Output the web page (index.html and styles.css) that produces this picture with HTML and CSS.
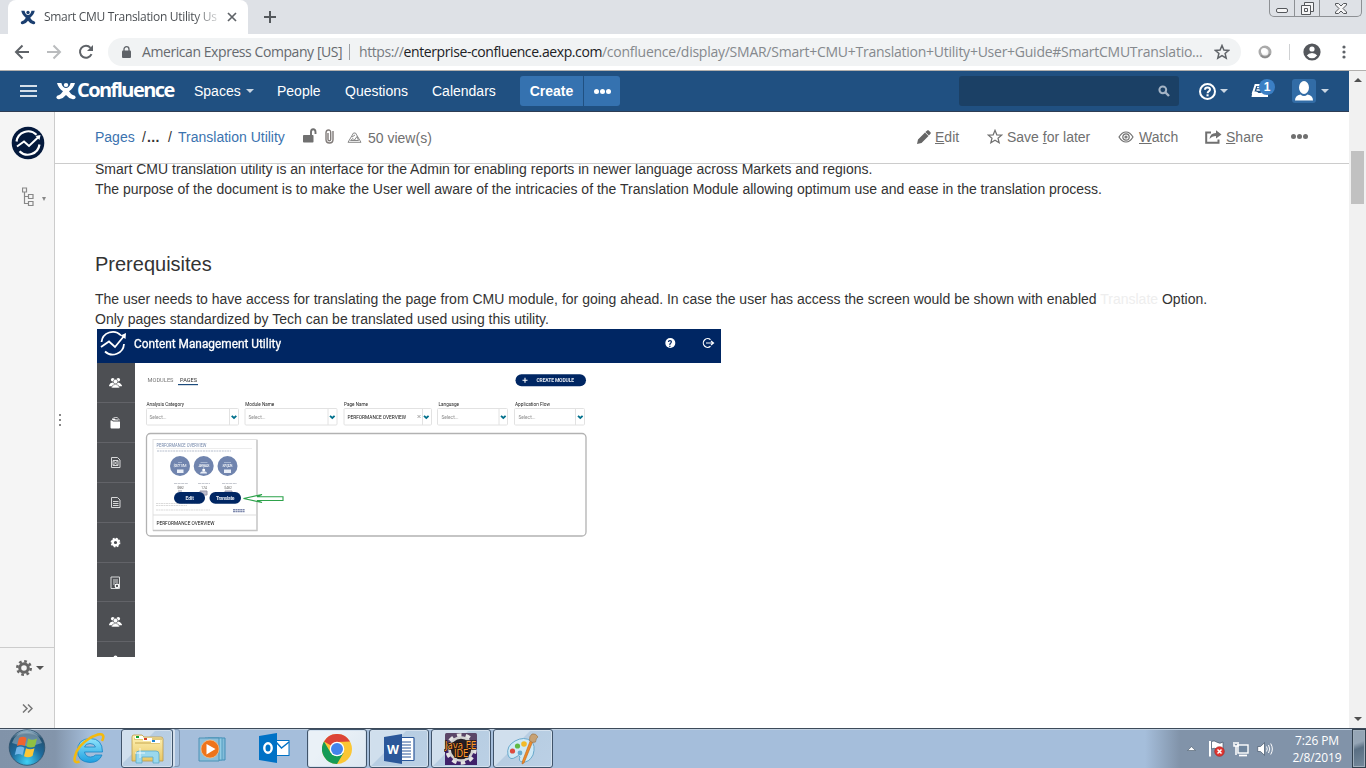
FILE: index.html
```html
<!DOCTYPE html>
<html lang="en">
<head>
<meta charset="utf-8">
<title>Smart CMU Translation Utility User Guide</title>
<link rel="stylesheet" href="styles.css">
</head>
<body>
<svg width="0" height="0" class="defs">
  <defs>
    <symbol id="conf" viewBox="0 0 16 16"><circle cx="8" cy="2.600" r="1.800"/><path d="M.8 .8H4.300C4.800 3.800 6.500 5.300 8 5.300S11.200 3.800 11.700 .8H15.200C14.500 4 12.700 6.500 10.400 8.200C11.500 10 12.500 11 13.500 11.500Q15.500 12 15.800 13.500Q15.500 15.500 13.500 15.300Q10 14.500 8 11.500Q6 14.500 2.500 15.300Q.5 15.500 .2 13.500Q.5 12 2.500 11.500C3.500 11 4.500 10 5.600 8.200C3.300 6.500 1.500 4 .8 .8Z"/></symbol>
    <symbol id="people" viewBox="0 0 14 12"><circle cx="4" cy="3" r="2"/><circle cx="10" cy="3" r="2"/><path d="M0 9Q1 6 4 6T7 8Q8 6 10 6T14 9V10H0Z"/><circle cx="7" cy="5" r="2.500" stroke="#4d4f53" stroke-width=".6"/><path d="M2.500 12Q3 8 7 8T11.500 12Z" stroke="#4d4f53" stroke-width=".6"/></symbol>
    <linearGradient id="gold" x2="0" y2="1"><stop stop-color="#fff3b8"/><stop offset="1" stop-color="#e8c765"/></linearGradient>
    <radialGradient id="orb" cx=".5" cy=".9" r=".9"><stop stop-color="#3fd0f5"/><stop offset=".5" stop-color="#1d6a9c"/><stop offset=".85" stop-color="#23506f"/><stop offset="1" stop-color="#a9c5d8"/></radialGradient>
    <linearGradient id="ie" x2="0" y2="1"><stop stop-color="#8fe4fb"/><stop offset="1" stop-color="#1e9fe0"/></linearGradient>
    <filter id="soft"><feGaussianBlur stdDeviation=".35"/></filter>
  </defs>
</svg>

<div class="tabstrip">
  <div class="tab">
    <svg class="fav" width="16" height="15"><use href="#conf"/></svg>
    <span class="tab-title">Smart CMU Translation Utility Us</span>
    <svg class="tab-x" width="10" height="10" viewBox="0 0 10 10"><path d="M1 1L9 9M9 1L1 9"/></svg>
  </div>
  <svg class="newtab" width="12" height="12" viewBox="0 0 12 12"><path d="M6 0V12M0 6H12"/></svg>
  <div class="winbtns">
    <span class="wb w1"><svg width="12" height="5" viewBox="0 0 12 5"><rect x=".5" y=".5" width="11" height="4" rx="1.500"/></svg></span>
    <span class="wb w2"><svg width="13" height="13" viewBox="0 0 13 13"><path d="M3.500 3V.5H12.500V9.500H9.500M.5 3.500H9.500V12.500H.5ZM3.500 6.500H6.500V9.500H3.500Z"/></svg></span>
    <span class="wb w3"><svg width="12" height="11" viewBox="0 0 12 11"><path d="M.5 .5H3.500L6 3L8.500 .5H11.500V2L8 5.500L11.500 9V10.500H8.500L6 8L3.500 10.500H.5V9L4 5.500L.5 2Z"/></svg></span>
  </div>
</div>

<div class="toolbar">
  <svg class="back" width="16" height="16" viewBox="0 0 16 16"><path d="M15 8H2M8.500 1.500L2 8L8.500 14.500"/></svg>
  <svg class="fwd" width="16" height="16" viewBox="0 0 16 16"><path d="M1 8H14M7.500 1.500L14 8L7.500 14.500"/></svg>
  <svg class="reload" width="16" height="16" viewBox="0 0 16 16"><path d="M13.500 10.200A6 6 0 1 1 12.500 3.800" fill="none" stroke="#5f6368" stroke-width="2"/><path d="M15 1V7H9Z" fill="#5f6368"/></svg>
  <div class="omnibox">
    <svg class="lock" width="9" height="12" viewBox="0 0 9 12"><path d="M2 5V3.200A2.500 2.500 0 0 1 7 3.200V5" fill="none" stroke="#5f6368" stroke-width="1.300"/><rect y="4.500" width="9" height="7.500" rx="1" fill="#5f6368"/></svg>
    <span class="company">American Express Company [US]</span>
    <span class="osep"></span>
    <span class="url">https://<b>enterprise-confluence.aexp.com</b><i>/confluence/display/SMAR/Smart+CMU+Translation+Utility+User+Guide#SmartCMUTranslatio...</i></span>
    <svg class="star" width="16" height="16" viewBox="0 0 16 16"><path d="M8 1.500L9.900 6L14.700 6.400L11.100 9.500L12.200 14.200L8 11.700L3.800 14.200L4.900 9.500L1.300 6.400L6.100 6Z" fill="none" stroke="#5f6368" stroke-width="1.500"/></svg>
  </div>
  <svg class="ext" width="14" height="14" viewBox="0 0 14 14"><circle cx="7" cy="7" r="5" fill="#f4f4f4" stroke="#aaa" stroke-width="3"/><path d="M3 10.500A5.500 5.500 0 0 0 12 9" stroke="#888" stroke-width="1.500" fill="none"/><circle cx="6" cy="6" r="3" fill="#fff"/></svg>
  <span class="tsep"></span>
  <svg class="prof" width="18" height="18" viewBox="0 0 18 18"><circle cx="9" cy="9" r="8.600" fill="#54575c"/><circle cx="9" cy="6" r="2.600" fill="#fff"/><path d="M3.800 12.500Q5.500 10 9 10T14.200 12.500Q12 15.300 9 15.300T3.800 12.500Z" fill="#fff"/></svg>
  <svg class="kebab" width="4" height="14" viewBox="0 0 4 14" fill="#5f6368"><circle cx="2" cy="2" r="1.600"/><circle cx="2" cy="7" r="1.600"/><circle cx="2" cy="12" r="1.600"/></svg>
</div>

<div class="page">
  <div class="site">
    <header class="nav">
      <svg class="burger" width="17" height="12" viewBox="0 0 17 12"><path d="M0 1H17M0 6H17M0 11H17" stroke="#d5dfe9" stroke-width="2"/></svg>
      <svg class="logo" width="20" height="18" viewBox="0 0 16 16" preserveAspectRatio="none"><use href="#conf" width="16" height="16"/></svg>
      <span class="brand">Confluence</span>
      <span class="n n1">Spaces <em class="car"></em></span>
      <span class="n n2">People</span>
      <span class="n n3">Questions</span>
      <span class="n n4">Calendars</span>
      <span class="create">Create</span><span class="more"><s></s><s></s><s></s></span>
      <div class="search"><svg width="12" height="12" viewBox="0 0 12 12"><circle cx="4.800" cy="4.800" r="3.400" fill="none" stroke="#a5b4c5" stroke-width="2"/><path d="M7 7L11 11" stroke="#a5b4c5" stroke-width="2.400"/></svg></div>
      <svg class="help" width="17" height="17" viewBox="0 0 17 17"><circle cx="8.500" cy="8.500" r="7.500" fill="none" stroke="#fff" stroke-width="2"/><path d="M6 6.800Q6 4.500 8.500 4.500T11 6.600Q11 7.700 9.700 8.400Q8.600 9 8.600 10.300" fill="none" stroke="#fff" stroke-width="2"/><rect x="7.500" y="11.300" width="2.100" height="2" fill="#fff"/></svg>
      <em class="car c2"></em>
      <div class="inbox"><svg width="18" height="14" viewBox="0 0 18 14"><path d="M4.500 1H13L12.500 9H11L10 10H7L6 9H2Z" fill="none" stroke="#fff" stroke-width="2"/><path d="M1.500 7.500H5.500L6.500 10.300H11L12 7.500H17V13H.5Z" fill="#fff"/><path d="M6 3.500H10M5.500 6H10" stroke="#fff" stroke-width="1.300"/></svg><span class="badge">1</span></div>
      <svg class="avatar" width="24" height="24" viewBox="0 0 24 24"><rect width="24" height="24" rx="3" fill="#326ca6"/><ellipse cx="12" cy="8.500" rx="5" ry="6.500" fill="#fff"/><path d="M3 21.500Q3 16.500 8.500 15.500Q12 18.500 15.500 15.500Q21 16.500 21 21.500Z" fill="#fff"/></svg>
      <em class="car c3"></em>
    </header>
    <div class="body">
      <aside class="side">
        <svg class="slogo" width="34" height="34" viewBox="0 0 34 34"><circle cx="17" cy="17" r="16.300" fill="#04193c"/><path d="M5.500 15.500A11.800 11.800 0 0 1 25.500 8.800M28.500 18.500A11.800 11.800 0 0 1 8.500 25.200" fill="none" stroke="#fff" stroke-width="2.200"/><path d="M6 20.500L13 15.500L18 20L28 10.500" fill="none" stroke="#fff" stroke-width="2"/><path d="M29.500 9L28.500 14L24.500 10Z" fill="#fff"/></svg>
        <div class="treerow"><svg width="12" height="20" viewBox="0 0 12 20" fill="none" stroke="#888"><path d="M.5 1H4.500V5H.5ZM2.500 5V16.500H6.500M2.500 9.500H6.500M6.500 7.500H11V11.500H6.500ZM6.500 14.500H11V18.500H6.500Z" stroke-width="1.200"/></svg><em class="car cs"></em></div>
        <div class="foot">
          <div class="gearrow"><svg width="16" height="16" viewBox="0 0 16 16"><circle cx="8" cy="8" r="6.700" fill="none" stroke="#666" stroke-width="2.600" stroke-dasharray="2.700 2.560"/><circle cx="8" cy="8" r="4.300" fill="none" stroke="#666" stroke-width="3"/></svg><em class="car cg"></em></div>
          <svg class="expand" width="11" height="9" viewBox="0 0 11 9"><path d="M1 .5L5 4.500L1 8.500M6 .5L10 4.500L6 8.500" fill="none" stroke="#777" stroke-width="1.500"/></svg>
        </div>
      </aside>
      <div class="grip"><s></s><s></s><s></s></div>
      <main class="main">
        <div class="phead">
          <div class="crumbs"><a class="k1">Pages</a><span class="k2">/<b>...</b></span><span class="k3">/</span><a class="k4">Translation Utility</a>
            <svg class="unlock" width="14" height="15" viewBox="0 0 14 15"><rect y="7" width="10.500" height="7.500" rx=".8" fill="#707070"/><path d="M8 7.500V4Q8 1.200 10.200 1.200T12.500 4V6" fill="none" stroke="#707070" stroke-width="1.900"/></svg>
            <svg class="clip" width="9" height="15" viewBox="0 0 9 15" fill="none"><path d="M3 4V10.500Q3 11.800 4.300 11.800T5.700 10.500V3.500Q5.700 1 3.500 1T1 3.500V10.500Q1 14 4.500 14T8 10.500V2" stroke="#807b79" stroke-width="1.400"/></svg>
            <svg class="tri" width="15" height="11" viewBox="0 0 15 11" fill="none" stroke="#888"><path d="M1 10.300L6.500 1H8.500L14 10.300ZM3.500 8.500L6 6.500L7.500 8L10 4.500L11.500 8.500ZM5 5L8 3"/></svg>
            <span class="views">50 view(s)</span></div>
          <div class="acts">
            <svg class="a1" width="14" height="14" viewBox="0 0 14 14"><path d="M0 14L1 9.500L8 2.500L11.500 6L4.500 13ZM8.400 2.100L10.500 .3Q11 0 11.500 .3L13.700 2.500Q14 3 13.700 3.500L11.900 5.600Z" fill="#666"/></svg><span class="t1"><u>E</u>dit</span>
            <svg class="a2" width="16" height="15" viewBox="0 0 16 15"><path d="M8 1.300L9.800 5.800L14.700 6.100L11 9.200L12.200 13.800L8 11.300L3.800 13.800L5 9.200L1.300 6.100L6.200 5.800Z" fill="none" stroke="#707070" stroke-width="1.200"/></svg><span class="t2">Save <u>f</u>or later</span>
            <svg class="a3" width="16" height="12" viewBox="0 0 16 12" fill="none" stroke="#707070" stroke-width="1.200"><path d="M1 6Q4 1 8 1T15 6Q12 11 8 11T1 6Z"/><circle cx="8" cy="6" r="3.200"/><circle cx="8" cy="6" r="1"/></svg><span class="t3"><u>W</u>atch</span>
            <svg class="a4" width="17" height="14" viewBox="0 0 17 14"><path d="M6 2.500H1.200V12.800H13.500V9.500" fill="none" stroke="#707070" stroke-width="2"/><path d="M4.500 9Q5 3.200 11 3V.3L16.500 4.500L11 8.500V6Q7 6 4.500 9Z" fill="#707070"/></svg><span class="t4"><u>S</u>hare</span>
            <span class="dots"><s></s><s></s><s></s></span>
          </div>
        </div>
        <div class="content">
          <p class="l p1"><span class="s1">Smart CMU translation utility is an interface for the Admin for enabling reports in newer language across Markets and regions.</span><br><span class="s2">The purpose of the document is to make the User well aware of the intricacies of the Translation Module allowing optimum use and ease in the translation process.</span></p>
          <h2>Prerequisites</h2>
          <p class="l"><span class="s3">The user needs to have access for translating the page from CMU module, for going ahead. In case the user has access the screen would be shown with enabled <span class="ghost">Translate</span> Option.</span><br><span class="s4">Only pages standardized by Tech can be translated used using this utility.</span></p>
          <svg class="shot" width="624" height="328" viewBox="97 329 624 328">
            <rect x="97" y="329" width="624" height="328" fill="#fff"/>
            <rect x="97" y="329" width="624" height="34" fill="#002663"/>
            <rect x="97" y="363" width="38" height="294" fill="#4d4f53"/>
            <g filter="url(#soft)">
              <path d="M101.500 342A11.300 11.300 0 0 1 121 335.500M124 344A11.300 11.300 0 0 1 105 351.500" fill="none" stroke="#fff" stroke-width="1.800"/>
              <path d="M101 347L109 341.500L115 347L124 336" fill="none" stroke="#fff" stroke-width="1.800"/>
              <path d="M126 333L125.500 339L120.500 335.500Z" fill="#fff"/>
              <text class="m" x="134" y="348.300" font-size="12" fill="#fff" stroke="#fff" stroke-width=".3" textLength="147" lengthAdjust="spacingAndGlyphs">Content Management Utility</text>
              <circle cx="670.300" cy="343" r="5" fill="#fff"/><text class="m" x="667.800" y="346.500" font-size="9" font-weight="700" fill="#002663">?</text>
              <path d="M710.500 339.800A4.300 4.300 0 1 0 710.500 346.200M706 343H713M711 341L713.500 343L711 345" fill="none" stroke="#fff" stroke-width="1.200"/>
              <path d="M97 402.500H135M97 442.500H135M97 482.500H135M97 522.500H135M97 562.500H135M97 601.500H135M97 641.500H135" stroke="#626468"/>
              <g fill="#fff">
                <use href="#people" x="109" y="377" width="13" height="11"/><use href="#people" x="109" y="616" width="13" height="11"/>
                <path d="M110.500 420.500H112L113 421.500H120V427.500Q120 428.500 119 428.500H111.500Q110.500 428.500 110.500 427.500ZM112 419.500V418.500H114.500L115.500 419.500H118V420.500H113.500ZM113.500 417.500V417H117L119.500 419.500V420.500H118.500V419L117 417.800Z"/>
                <circle cx="115.500" cy="657.500" r="2"/>
              </g>
              <g fill="none" stroke="#d7d8d9">
                <path d="M111.500 457.500H117.500L120 460V467.500H111.500ZM113 460.500H118V465.500H113ZM113.500 461L117.500 465M117.500 461L113.500 465"/>
                <path d="M111.500 497.500H117.500L120 500V507.500H111.500ZM113 501.500H118.500M113 503.500H118.500M113 505.500H118.500" />
                <path d="M112 577H119.500V588.500H111V577ZM113 580H118M113 582H118M113 584H115"/>
                <circle cx="117" cy="586" r="1.800" fill="#4d4f53" stroke="#fff" stroke-width="1.300"/>
                <circle cx="115.500" cy="542.500" r="2.800" stroke="#fff" stroke-width="2.400"/><circle cx="115.500" cy="542.500" r="4.200" stroke="#fff" stroke-width="1.400" stroke-dasharray="1.700 1.600"/>
              </g>
              <text class="m" x="147.500" y="381.700" font-size="5.500" fill="#777" textLength="26" lengthAdjust="spacingAndGlyphs">MODULES</text>
              <text class="m" x="180" y="381.700" font-size="5.500" fill="#333" textLength="17" lengthAdjust="spacingAndGlyphs">PAGES</text>
              <rect x="178" y="384" width="20" height="1.200" fill="#1f4b7d"/>
              <rect x="515.500" y="374.300" width="70.500" height="12" rx="6" fill="#002663"/>
              <path d="M525 377.800V382.800M522.500 380.300H527.500" stroke="#fff" stroke-width="1.100"/>
              <text class="m" x="536.500" y="382.300" font-size="5" font-weight="700" fill="#dfe5ee" textLength="37.500">CREATE MODULE</text>
              <g class="m" font-size="4.600" fill="#222">
                <text x="146.500" y="405.800" textLength="37.500" lengthAdjust="spacingAndGlyphs">Analysis Category</text><text x="245.300" y="405.800" textLength="29" lengthAdjust="spacingAndGlyphs">Module Name</text><text x="344" y="405.800" textLength="24" lengthAdjust="spacingAndGlyphs">Page Name</text><text x="438.500" y="405.800" textLength="20.500" lengthAdjust="spacingAndGlyphs">Language</text><text x="515" y="405.800" textLength="35" lengthAdjust="spacingAndGlyphs">Application Flow</text>
              </g>
              <g fill="#fff" stroke="#e2e2e2">
                <rect x="146.500" y="408.500" width="92" height="16.500" rx="1"/><rect x="245" y="408.500" width="92" height="16.500" rx="1"/><rect x="344" y="408.500" width="87.500" height="16.500" rx="1"/><rect x="437.500" y="408.500" width="70" height="16.500" rx="1"/><rect x="514.500" y="408.500" width="70" height="16.500" rx="1"/>
                <path d="M229.500 409V425M328 409V425M422.500 409V425M499 409V425M575.500 409V425"/>
              </g>
              <g class="m" font-size="4.800" fill="#888">
                <text x="149.500" y="418.500" textLength="17">Select...</text><text x="248.500" y="418.500" textLength="17">Select...</text><text x="441.500" y="418.500" textLength="17">Select...</text><text x="518.500" y="418.500" textLength="17">Select...</text>
                <text x="347.500" y="418.500" fill="#111" textLength="58.500" lengthAdjust="spacingAndGlyphs">PERFORMANCE OVERVIEW</text>
              </g>
              <path d="M417.500 415L420.500 418M420.500 415L417.500 418" stroke="#888" stroke-width=".7"/>
              <path d="M231.700 415.800L234 418L236.300 415.800M330 415.800L332.300 418L334.600 415.800M424 415.800L426.300 418L428.600 415.800M501 415.800L503.300 418L505.600 415.800M578 415.800L580.300 418L582.600 415.800" fill="none" stroke="#00708c" stroke-width="1.800"/>
              <rect x="146.500" y="433.500" width="439.500" height="102.500" rx="4" fill="#fff" stroke="#b2b2b2" stroke-width="1.300"/>
              <rect x="153" y="439.500" width="104" height="91" fill="#fff" stroke="#e2e2e2"/>
              <path d="M153 530.500H257V440" fill="none" stroke="#c4c4c4" stroke-width="1.300"/>
              <path d="M153 515H256" stroke="#ddd"/>
              <text class="m" x="156.500" y="447.200" font-size="4.700" fill="#7185a8" textLength="50" lengthAdjust="spacingAndGlyphs">PERFORMANCE OVERVIEW</text>
              <path d="M156 448.500H252" stroke="#e5e5e5" stroke-width=".7"/>
              <path d="M157 451H231" stroke="#b5bdcc" stroke-width="1" stroke-dasharray="2 .7"/>
              <g fill="#6f84ae"><circle cx="180" cy="466" r="10"/><circle cx="203.700" cy="466" r="10"/><circle cx="227.500" cy="466" r="10"/></g>
              <g class="m" font-size="4" fill="#fff"><text x="173.500" y="467" textLength="13">$377.17M</text><text x="198.500" y="467" textLength="11">489,843</text><text x="222.500" y="467" textLength="10">877,478</text></g>
              <path d="M178 462.500H182M200.500 462.500H207.500M224 462.500H231" stroke="#b2bfd7" stroke-width=".8"/>
              <path d="M177 469.500H183.500V473H177ZM200 473.500Q200.500 471.300 203.700 471.300T207 473.500ZM224 469.500H231V473H224Z" fill="#e9eef7"/><circle cx="203.700" cy="470" r="1.500" fill="#fff"/>
              <path d="M174 483.500H188M198 483.500H210M222 483.500H237" stroke="#c6c9d0" stroke-width="1" stroke-dasharray="3 .6"/>
              <g class="m" font-size="4" fill="#888"><text x="177" y="488.500" textLength="7">$882</text><text x="201" y="488.500" textLength="6">1.74</text><text x="224" y="488.500" textLength="8">$482</text></g>
              <path d="M178 491H182M200 491H207V495H200ZM225 491H232V494H225Z" stroke="#99a" fill="#bbc"/>
              <path d="M156 503.500H200M156 505.500H187M156 510H210" stroke="#d2d2d2" stroke-width=".8" stroke-dasharray="2 .5"/>
              <path d="M233 509.700H245M233 511.500H245" stroke="#7e89ad" stroke-width="1.300" stroke-dasharray="2 .4"/>
              <rect x="174" y="492" width="31" height="11.700" rx="5.800" fill="#002663"/><rect x="209.500" y="492" width="31.500" height="11.700" rx="5.800" fill="#002663"/>
              <text class="m" x="185.500" y="499.700" font-size="5" font-weight="700" fill="#dfe5ee" textLength="8.500">Edit</text><text class="m" x="216" y="499.700" font-size="5" font-weight="700" fill="#dfe5ee" textLength="18.500">Translate</text>
              <path d="M243.500 498.500L262 494.500L257 496.800H283V500.500H257L262 502.500Z" fill="#fff" stroke="#2da24b" stroke-width="1.100"/>
              <text class="m" x="156.500" y="524.500" font-size="4.900" fill="#111" textLength="58" lengthAdjust="spacingAndGlyphs">PERFORMANCE OVERVIEW</text>
            </g>
          </svg>
        </div>
      </main>
    </div>
  </div>
  <div class="scroll"><em class="up"></em><span class="thumb"></span><em class="down"></em></div>
</div>

<footer class="taskbar">
  <svg class="start" width="38" height="38" viewBox="0 0 38 38"><circle cx="19" cy="18.500" r="17.800" fill="url(#orb)" stroke="#2b4f6a" stroke-width=".8"/><path d="M4 14Q8 2 19 2.500T34 14Q19 20 4 14Z" fill="#fff" opacity=".3"/><path d="M11 9Q15 6.500 18.500 9L16.800 17Q13.500 15 9 17Z" fill="#ef6430"/><path d="M20.200 9.500Q24 12 29 9.500L27 17.500Q23 19.500 18.500 17.500Z" fill="#8fc043"/><path d="M8.600 18.500Q12.500 16.500 16.400 18.700L14.500 26.500Q11.500 24 6.800 26Z" fill="#70b5e8"/><path d="M18 19.200Q22 21.500 26.500 19.200L24.500 27Q20 29.500 16 27.200Z" fill="#fdc735"/></svg>
  <svg class="ieico" width="32" height="32" viewBox="0 0 32 32"><path d="M29.500 19H11.500Q12.500 24 17.500 24Q20.500 24 22.500 22H29Q26 29.500 17 29.500Q4.500 29 4.500 17.500T17 5.500Q29.500 5.500 29.500 19ZM11.500 14H22.500Q21.500 10.500 17 10.500T11.500 14Z" fill="url(#ie)" stroke="#1783c4" stroke-width=".8"/><path d="M6.500 28.500Q0 31 2 23.500Q4 13 17 5Q28 -1 30 2.500Q31 4 29 8" fill="none" stroke="#f3b90f" stroke-width="2.600"/></svg>
  <div class="tb explorer"><svg width="34" height="32" viewBox="0 0 34 32"><path d="M2 4Q2 2 4 2H12L14 4H31Q33 4 33 6V28H2Z" fill="url(#gold)" stroke="#bc9b46" stroke-width=".8"/><path d="M4 6H32M5 10H30" stroke="#c9a951"/><rect x="5" y="3" width="8" height="3" fill="#fff"/><rect x="6" y="3" width="3" height="2" fill="#12a12f"/><rect x="13" y="5" width="9" height="3" fill="#fff"/><rect x="14" y="5" width="3" height="2" fill="#d44128"/><rect x="21" y="7" width="9" height="3" fill="#fff"/><rect x="22" y="7" width="3" height="2" fill="#2186d2"/><path d="M6 30V21Q6 18 9 18H26Q29 18 29 21V30H23V24H12V30Z" fill="#9ad8ee" stroke="#5aaac8" stroke-width=".8"/><path d="M10 15V25M5 20H15" stroke="#fff" stroke-width=".8"/></svg></div>
  <div class="stack"></div>
  <svg class="wmp" width="30" height="28" viewBox="0 0 30 28"><path d="M10 3H27V25H10Z" fill="#83bcd9" stroke="#428fb7"/><path d="M7 3H24V25H7Z" fill="#92cce4" stroke="#529cc0"/><path d="M1 3H21V26H1Z" fill="#8dbfdb" stroke="#4d92b5"/><circle cx="12" cy="14" r="9" fill="#ee741b" stroke="#f9c389" stroke-width=".7"/><path d="M8.500 9L17.500 14L8.500 19.500Z" fill="#fff"/></svg>
  <svg class="outlook" width="31" height="30" viewBox="0 0 31 30"><rect x="17" y="7.500" width="13" height="15" fill="#fff" stroke="#0072c6" stroke-width="1"/><path d="M17 9L22.500 15L30 9" fill="none" stroke="#0072c6" stroke-width="1.500"/><path d="M0 3L18 0V30L0 27Z" fill="#0072c6"/><ellipse cx="9" cy="15" rx="3.700" ry="4.700" fill="none" stroke="#fff" stroke-width="2.400"/></svg>
  <div class="tb g1 active"><svg width="30" height="30" viewBox="0 0 30 30"><circle cx="15" cy="15" r="15" fill="#fbc634"/><path d="M15 15L2 7.500A15 15 0 0 1 28 7.500L15 8Z" fill="#dc4437"/><path d="M2 7.500A15 15 0 0 0 15 30L21.500 19L8.500 18.500Z" fill="#159b57"/><circle cx="15" cy="15" r="7.300" fill="#fff"/><circle cx="15" cy="15" r="6" fill="#4384ec"/></svg></div>
  <div class="tb"><svg width="31" height="30" viewBox="0 0 31 30"><rect x="16" y="3.500" width="14" height="23" rx=".8" fill="#fff" stroke="#2b579a" stroke-width="1.200"/><path d="M18 8H27M18 11H27M18 14H27M18 17H27M18 20H27M18 23H27" stroke="#2b579a"/><path d="M0 3L18 0V30L0 27Z" fill="#2b579a"/><text x="3" y="20" class="wtxt" textLength="12" lengthAdjust="spacingAndGlyphs">W</text></svg></div>
  <div class="tb"><svg width="34" height="32" viewBox="-1 0 34 32"><rect width="32" height="32" rx="1.500" fill="#5b4668"/><rect y="18" width="32" height="14" fill="#40226a"/><circle cx="16" cy="16" r="13.300" fill="none" stroke="#e4e4e4" stroke-width="5" stroke-dasharray="4.300 4.050"/><circle cx="16" cy="16" r="11.500" fill="#241e25" stroke="#d2d2d2" stroke-width="2.500"/><text x="0" y="15.500" class="java" textLength="31.500" lengthAdjust="spacingAndGlyphs">Java EE</text><text x="9" y="24" class="java" textLength="14.500" lengthAdjust="spacingAndGlyphs">IDE</text></svg></div>
  <div class="tb"><svg width="34" height="32" viewBox="0 0 34 32"><path d="M2 22Q0 13 9 8T25 8Q30 12 27 22Q23 30 16 29Q12 28 14 24Q13 21 10 24Q4 28 2 22Z" fill="#cfe9f6" stroke="#69a9cc"/><circle cx="6.500" cy="18" r="2.600" fill="#dc4a3f"/><circle cx="11.500" cy="13" r="2.600" fill="#5fb944"/><circle cx="18" cy="11" r="2.800" fill="#f2ba28"/><circle cx="14" cy="20" r="2.400" fill="#68abd0"/><path d="M27 8L18 30L16 31L16.500 28L24.500 7Z" fill="#ef8b28" stroke="#be6419" stroke-width=".6"/><path d="M23.500 7.500Q23 3 26 1Q30 0 32 4Q30 5 29.500 9Q26 10.500 23.500 7.500Z" fill="#c7a274" stroke="#957047" stroke-width=".6"/></svg></div>
  <div class="tray">
    <svg class="y1" width="9" height="5" viewBox="0 0 9 5"><path d="M.5 4.500L4.500 .7L8.500 4.500Z" fill="#fff" stroke="#4a5a6a" stroke-width=".6"/></svg>
    <svg class="y2" width="16" height="17" viewBox="0 0 16 17"><path d="M1 1V16.500" stroke="#fff" stroke-width="2"/><path d="M2.500 1.500Q5 0 8 2.200T14 2V9Q11 10.500 8 9T2.500 9Z" fill="#fff" stroke="#46586b" stroke-width=".7"/><circle cx="10.500" cy="11.500" r="4.800" fill="#e13732" stroke="#a71b17" stroke-width=".6"/><path d="M8.500 9.500L12.500 13.500M12.500 9.500L8.500 13.500" stroke="#fff" stroke-width="1.500"/></svg>
    <svg class="y3" width="16" height="16" viewBox="0 0 16 16"><rect x="5" y="4" width="10" height="8" fill="#70869e" stroke="#fff" stroke-width="1.400"/><path d="M6 14.500H14" stroke="#fff" stroke-width="1.700"/><path d="M1 1V5H5V1M3 1V3M3 5V14" fill="none" stroke="#fff" stroke-width="1.500"/></svg>
    <svg class="y4" width="17" height="14" viewBox="0 0 17 14"><path d="M.7 4.500H3.500L7.500 .7V13.300L3.500 9.500H.7Z" fill="#fff" stroke="#45566a" stroke-width=".7"/><path d="M9.500 4.500Q11 7 9.500 9.500M11.500 3Q14 7 11.500 11M13.700 1.500Q17 7 13.700 12.500" fill="none" stroke="#fff"/></svg>
    <div class="clock"><span>7:26 PM</span><span>2/8/2019</span></div>
    <div class="desk"></div>
  </div>
</footer>
</body>
</html>
```
FILE: styles.css
```css
* { box-sizing: border-box; }
body { margin: 0; width: 1366px; height: 768px; overflow: hidden; display: flex; flex-direction: column; background: #fff; font: 14px/20px "Liberation Sans", Arial, sans-serif; color: #333; }
svg { display: block; flex: none; }
.defs { height: 0; width: 0; position: absolute; }
s { text-decoration: none; }
b, i { font-weight: normal; font-style: normal; }
span, a { white-space: nowrap; }

/* browser chrome */
.tabstrip { height: 34px; flex: none; background: #dee1e6; display: flex; align-items: flex-start; padding-left: 8px; font-family: "Open Sans", sans-serif; }
.tab { width: 240px; height: 34px; background: #fff; border-radius: 8px 8px 0 0; display: flex; align-items: center; padding-left: 12px; flex: none; }
.fav { fill: #1b3f70; }
.tab-title { font-size: 12px; letter-spacing: -0.32px; width: 177px; margin-left: 8px; background: linear-gradient(90deg, #45494d 150px, #fff 180px); -webkit-background-clip: text; color: transparent; }
.tab-x { margin-left: 6px; stroke: #5f6368; stroke-width: 1.7; }
.newtab { margin: 11px 0 0 16px; stroke: #54585c; stroke-width: 2; }
.winbtns { margin: 0 4px 0 auto; height: 17px; display: flex; border: 1px solid #8d9094; border-top: 0; border-radius: 0 0 5px 5px; }
.wb { display: flex; align-items: center; justify-content: center; border-right: 1px solid #8d9094; }
.wb svg { fill: #f5f5f6; stroke: #54575b; }
.w1 { width: 25px; padding-top: 4px; }
.w2 { width: 25px; }
.w3 { width: 41px; border: 0; }
.toolbar { height: 37px; flex: none; display: flex; align-items: center; border-bottom: 1px solid #b2b0ae; padding-left: 14px; font-family: "Open Sans", sans-serif; }
.back, .fwd { fill: none; stroke: #5f6368; stroke-width: 2; }
.fwd { stroke: #babcbe; margin-left: 16px; }
.reload { margin-left: 16px; }
.omnibox { width: 1133px; height: 28px; margin-left: 14px; border-radius: 14px; background: #f1f3f4; display: flex; align-items: center; padding-left: 14px; font-size: 14px; color: #777b80; flex: none; }
.company { width: 201px; margin-left: 11px; color: #666a6f; letter-spacing: -0.43px; }
.osep { width: 1px; height: 16px; background: #9da0a4; margin-left: 6px; }
.url { width: 842px; margin-left: 9px; letter-spacing: -0.4px; }
.url b { color: #202124; }
.url i { color: #85898d; letter-spacing: -0.25px; }
.star { margin-left: 13px; }
.ext { margin-left: 17px; }
.tsep { width: 1px; height: 16px; background: #cfd1d3; margin-left: 17px; }
.prof { margin-left: 13px; }
.kebab { margin-left: 21px; }

/* confluence */
.page { height: 657px; flex: none; display: flex; }
.site { width: 1349px; display: flex; flex-direction: column; }
.nav { height: 41px; flex: none; background: #205081; border-bottom: 1px solid #2e3d54; display: flex; align-items: center; padding-left: 20px; color: #fff; }
.logo { fill: #fff; margin: 0 0 1px 19px; }
.brand { font: bold 20px/24px "Open Sans", sans-serif; letter-spacing: -1.55px; width: 98px; margin-left: 1px; padding-bottom: 2px; }
.n { font-size: 14px; }
.n1 { width: 60px; margin-left: 19px; display: flex; align-items: center; gap: 5px; }
.n2 { width: 45px; margin-left: 23px; }
.n3 { width: 64px; margin-left: 23px; }
.n4 { width: 65px; margin-left: 23px; }
.car { border: 4px solid transparent; border-top-color: #c9d6e3; border-bottom: 0; flex: none; }
.create { margin-left: 23px; width: 63px; height: 30px; background: #3572b0; border-radius: 3px 0 0 3px; font-weight: bold; text-align: center; line-height: 30px; }
.more { margin-left: 1px; width: 36px; height: 30px; background: #3572b0; border-radius: 0 3px 3px 0; display: flex; gap: 1px; align-items: center; justify-content: center; }
.more s { width: 5px; height: 5px; border-radius: 3px; background: #fff; }
.search { margin-left: 339px; width: 220px; height: 30px; background: #1b4065; border-radius: 3px; display: flex; align-items: center; justify-content: flex-end; padding-right: 9px; }
.help { margin-left: 20px; }
.c2 { margin-left: 4px; }
.inbox { margin-left: 23px; width: 27px; position: relative; }
.badge { position: absolute; left: 8px; top: -5px; width: 16px; height: 16px; border-radius: 8px; background: #3b7fc4; font: bold 12px/16px "Liberation Sans", sans-serif; text-align: center; }
.avatar { margin-left: 14px; }
.c3 { margin-left: 5px; }
.body { flex: 1; display: flex; min-height: 0; }
.side { width: 55px; flex: none; background: #f5f5f5; border-right: 1px solid #ccc; display: flex; flex-direction: column; }
.slogo { margin: 14px 0 0 11px; }
.treerow { display: flex; align-items: center; margin: 27px 0 0 22px; }
.cs { border-width: 4px 2.5px 0; border-top-color: #888; margin: 3px 0 0 8px; }
.foot { margin-top: auto; height: 81px; border-top: 1px solid #ccc; }
.gearrow { display: flex; align-items: center; margin: 12px 0 0 16px; }
.cg { border-top-color: #555; margin-left: 4px; }
.expand { margin: 28px 0 0 22px; }
.grip { width: 8px; display: flex; flex-direction: column; gap: 3px; padding: 302px 0 0 4px; }
.grip s { width: 2px; height: 2px; background: #888; }
.main { flex: 1; min-width: 0; display: flex; flex-direction: column; margin-left: -8px; }
.phead { height: 52px; flex: none; border-bottom: 1px solid #ccc; display: flex; align-items: center; padding: 0 0 2px 40px; }
.crumbs { width: 822px; display: flex; align-items: center; flex: none; color: #333; }
.crumbs a { color: #3b73af; }
.k1 { width: 40px; }
.k2 { width: 20px; margin-left: 7px; }
.k2 b { font-weight: bold; margin-left: 1px; letter-spacing: .4px; }
.k3 { width: 5px; margin-left: 6px; }
.k4 { width: 107px; margin-left: 5px; }
.unlock { margin: 0 0 2px 18px; }
.clip { margin: 0 0 1px 8px; }
.tri { margin: 1px 0 0 13px; }
.views { margin-left: 6px; padding-top: 2px; color: #707070; }
.acts { display: flex; align-items: center; color: #707070; }
.t1 { margin-left: 4px; width: 25px; }
.a2 { margin-left: 27px; }
.t2 { margin-left: 4px; width: 84px; }
.a3 { margin-left: 27px; }
.t3 { margin-left: 5px; width: 40px; }
.a4 { margin-left: 26px; }
.t4 { margin-left: 4px; width: 38px; }
.dots { margin-left: 27px; display: flex; gap: 1px; }
.dots s { width: 5px; height: 5px; border-radius: 3px; background: #707070; }
.content { flex: 1; overflow: hidden; padding-left: 40px; min-height: 0; }
.l { margin: 0; line-height: 20px; white-space: nowrap; }
.p1 { margin-top: -5px; }
.content h2 { margin: 50px 0 10px; font: normal 20px/30px "Liberation Sans", sans-serif; }
.ghost { color: #eee; }
.shot { margin-left: 2px; }
.m { font-family: Roboto, sans-serif; }
.scroll { width: 17px; background: #f1f1f1; display: flex; flex-direction: column; align-items: center; }
.up { border: 4px solid transparent; border-bottom-color: #505050; border-top: 0; margin-top: 7px; }
.thumb { width: 13px; height: 53px; background: #c1c1c1; margin-top: 69px; }
.down { border: 4px solid transparent; border-top-color: #505050; border-bottom: 0; margin: auto 0 7px; }

/* desktop taskbar */
.taskbar { height: 40px; flex: none; border-top: 1px solid #3d4a59; box-shadow: inset 0 1px #c1d1e2; background: linear-gradient(90deg, #8193a9 0, #8395ab 55px, #a5bedb 90px, #a5bedb 1145px, #8193a9 1180px); display: flex; align-items: flex-start; padding-left: 8px; }
.ieico { margin: 4px 0 0 27px; }
.tb { width: 60px; height: 39px; margin-left: 2px; border: 1px solid #40546a; border-radius: 3px; box-shadow: inset 0 0 0 1px #d4e1ee; background: linear-gradient(135deg, #d0dfed 0 38%, #b7cde2 40%, #bbd0e5); display: flex; align-items: center; justify-content: center; flex: none; }
.explorer { margin-left: 16px; width: 52px; }
.stack { width: 7px; height: 38px; border: 1px solid #8198b2; border-left: 2px solid #d5e0ec; border-radius: 0 3px 3px 0; }
.wmp { margin: 6px 0 0 18px; }
.outlook { margin: 4px 0 0 31px; }
.g1 { margin-left: 17px; }
.active { background: linear-gradient(135deg, #eaf1f7 0 35%, #dce7f1); }
.wtxt { font: bold 13px "Open Sans", sans-serif; fill: #fff; }
.java { font: 10.5px "DejaVu Sans", sans-serif; fill: #ff9a2e; stroke: #1b1111; stroke-width: 1.6px; paint-order: stroke; }
.tray { margin-left: auto; display: flex; height: 39px; align-items: center; }
.y2 { margin-left: 13px; }
.y3 { margin-left: 8px; }
.y4 { margin-left: 8px; }
.clock { width: 60px; margin-left: 13px; margin-right: 5px; padding-top: 1px; display: flex; flex-direction: column; align-items: center; font: 12px/17px "Open Sans", sans-serif; letter-spacing: -.15px; color: #fff; }
.desk { width: 14px; height: 39px; border: 1px solid #32414f; box-shadow: inset 0 0 0 1px #a0afbc; background: linear-gradient(160deg, #95a5b5 0 35%, #5a6f83 50%, #75899b); }
```
